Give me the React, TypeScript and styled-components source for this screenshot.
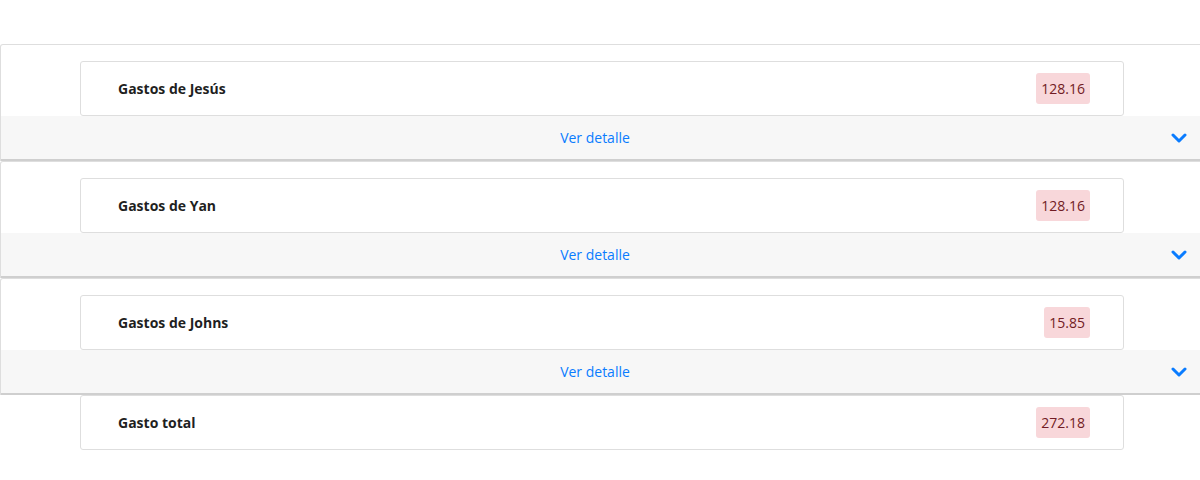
import React from 'react';
import styled, { createGlobalStyle } from 'styled-components';

const GlobalStyle = createGlobalStyle`
  body {
    margin: 0;
    background: #fff;
    font-family: "Open Sans", "Noto Sans", sans-serif;
    overflow-x: hidden;
  }
`;

const gastos = [
    { name: 'Gastos de Jesús', amount: '128.16' },
    { name: 'Gastos de Yan', amount: '128.16' },
    { name: 'Gastos de Johns', amount: '15.85' },
];

const Page = styled.div`
  padding-top: 44px;
  width: 1204px;
`;

const Card = styled.div`
  border: 1px solid #dedede;
  border-bottom: none;
  border-radius: 3px 3px 0 0;
  padding-top: 16px;
  background: #fff;
`;

const Row = styled.div`
  margin-left: 79px;
  width: 1044px;
  height: 55px;
  box-sizing: border-box;
  border: 1px solid #dedede;
  border-radius: 3px;
  display: flex;
  align-items: center;
  justify-content: space-between;
  padding: 0 33px 0 37px;
  background: #fff;
`;

const TotalRow = styled(Row)`
  margin-left: 80px;
`;

const Name = styled.span`
  font-size: 14px;
  font-weight: 700;
  color: #1f1f1f;
  margin-top: -1px;
`;

const Badge = styled.span`
  display: inline-flex;
  align-items: center;
  height: 31px;
  padding: 0 5px;
  border-radius: 3px;
  background: #f8d7da;
  color: #721c24;
  font-size: 14px;
  margin-top: -1px;
`;

const Footer = styled.div`
  height: 43px;
  background: #f7f7f7;
  border-bottom: 2px solid #cfcfcf;
  display: flex;
  align-items: center;
  padding-left: 18px;
`;

const Link = styled.span`
  flex: 1;
  text-align: center;
  font-size: 14px;
  color: #0a7cff;
`;

const Chevron = styled.svg`
  width: 16px;
  height: 10px;
  margin-right: 16px;
  color: #0a7cff;
`;

export default function App() {
    return (
        <Page>
            <GlobalStyle />
            {gastos.map((g) => (
                <Card key={g.name}>
                    <Row>
                        <Name>{g.name}</Name>
                        <Badge>{g.amount}</Badge>
                    </Row>
                    <Footer>
                        <Link>Ver detalle</Link>
                        <Chevron viewBox="0 0 16 10" fill="none">
                            <path d="M2 2 L8 8 L14 2" stroke="currentColor" strokeWidth="3" strokeLinecap="round" strokeLinejoin="round" />
                        </Chevron>
                    </Footer>
                </Card>
            ))}
            <TotalRow>
                <Name>Gasto total</Name>
                <Badge>272.18</Badge>
            </TotalRow>
        </Page>
    );
}
